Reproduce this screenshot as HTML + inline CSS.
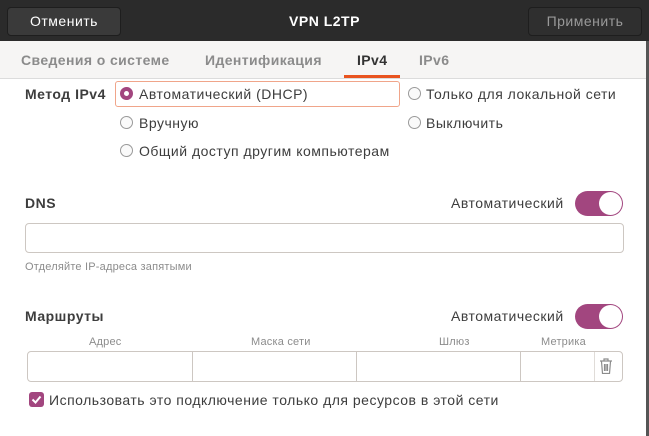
<html><head><style>
body{margin:0;width:649px;height:436px;overflow:hidden;font-family:"Liberation Sans",sans-serif;background:#fff;position:relative;color:#3d3d3d;font-size:14px;letter-spacing:0.5px}
.a{position:absolute;white-space:nowrap}
.hdr{left:0;top:0;width:649px;height:41px;background:#2b2b2b}
.btn{top:7px;height:27px;border:1px solid #1e1e1e;background:#3a3a3a;border-radius:4px;font-size:14px;line-height:27px;text-align:center}
.tabs{left:0;top:41px;width:646px;height:37px;background:#f6f5f4;border-bottom:1px solid #dcdcdc}
.tab{top:52px;font-weight:bold;font-size:14px;color:#8b8b8b;letter-spacing:0.4px}
.r{width:13px;height:13px;border:1px solid #9a9a9a;border-radius:50%;background:#fafafa;box-sizing:border-box}
.entry{border:1px solid #cdc7c2;border-radius:4px;background:#fff}
.sw{width:48px;height:25px;border-radius:13px;background:#a2467f}
.sw::after{content:"";position:absolute;right:1px;top:1px;width:23px;height:23px;border-radius:50%;background:#fff}
.small{font-size:11px;color:#8c8c8c;letter-spacing:0.2px}
</style></head><body>
<div class="a hdr"></div>
<div class="a btn" style="left:7px;width:112px;color:#fff">Отменить</div>
<div class="a" style="left:0;width:649px;top:13px;text-align:center;color:#fff;font-weight:bold">VPN L2TP</div>
<div class="a btn" style="left:528px;width:112px;color:#999;background:#2f2f2f">Применить</div>
<div class="a" style="right:0;top:41px;width:3px;height:395px;background:#555"></div>
<div class="a tabs"></div>
<div class="a tab" style="left:21px">Сведения о системе</div>
<div class="a tab" style="left:205px">Идентификация</div>
<div class="a tab" style="left:357px;color:#333">IPv4</div>
<div class="a tab" style="left:419px">IPv6</div>
<div class="a" style="left:344px;top:75px;width:56px;height:3px;background:#e95420"></div>
<div class="a" style="left:25px;top:86px;font-weight:bold">Метод IPv4</div>
<div class="a" style="left:115px;top:81px;width:283px;height:24px;border:1px solid #f0a58a;border-radius:3px"></div>
<div class="a r" style="left:120px;top:87px;border:4px solid #a2467f;background:#fff"></div>
<div class="a" style="left:139px;top:86px">Автоматический (DHCP)</div>
<div class="a r" style="left:120px;top:116px"></div><div class="a" style="left:139px;top:115px">Вручную</div>
<div class="a r" style="left:120px;top:144px"></div><div class="a" style="left:139px;top:143px">Общий доступ другим компьютерам</div>
<div class="a r" style="left:408px;top:87px"></div><div class="a" style="left:426px;top:86px">Только для локальной сети</div>
<div class="a r" style="left:408px;top:116px"></div><div class="a" style="left:426px;top:115px">Выключить</div>
<div class="a" style="left:25px;top:195px;font-weight:bold">DNS</div>
<div class="a" style="left:451px;top:195px">Автоматический</div>
<div class="a sw" style="left:575px;top:191px"></div>
<div class="a entry" style="left:25px;top:223px;width:597px;height:28px"></div>
<div class="a small" style="left:25px;top:261px">Отделяйте IP-адреса запятыми</div>
<div class="a" style="left:25px;top:308px;font-weight:bold">Маршруты</div>
<div class="a" style="left:451px;top:308px">Автоматический</div>
<div class="a sw" style="left:575px;top:304px"></div>
<div class="a small" style="left:89px;top:336px">Адрес</div>
<div class="a small" style="left:251px;top:336px">Маска сети</div>
<div class="a small" style="left:439px;top:336px">Шлюз</div>
<div class="a small" style="left:541px;top:336px">Метрика</div>
<div class="a entry" style="left:27px;top:351px;width:594px;height:29px;display:flex">
<div style="width:164px;border-right:1px solid #cdc7c2"></div><div style="width:163px;border-right:1px solid #cdc7c2"></div><div style="width:163px;border-right:1px solid #cdc7c2"></div><div style="width:73px;border-right:1px solid #e0dcd8"></div></div>
<svg class="a" style="left:599px;top:358px" width="14" height="16" viewBox="0 0 14 16" fill="none" stroke="#8c8c8c" stroke-width="1.2"><path d="M1 3h12M5 3V1h4v2M2.5 3.5l1 12h7l1-12M5.5 6v7M7 6v7M8.5 6v7"/></svg>
<div class="a" style="left:29px;top:392px;width:15px;height:15px;background:#a2467f;border-radius:3px"></div>
<svg class="a" style="left:29px;top:392px" width="15" height="15"><path d="M3.5 7.5l3 3 5-6" stroke="#fff" stroke-width="2" fill="none"/></svg>
<div class="a" style="left:49px;top:392px">Использовать это подключение только для ресурсов в этой сети</div>
</body></html>
